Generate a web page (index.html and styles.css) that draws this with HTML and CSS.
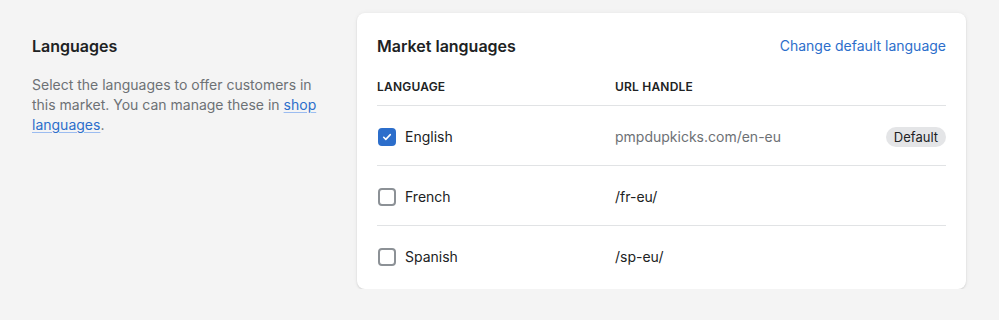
FILE: index.html
```html
<!DOCTYPE html>
<html lang="en">
<head>
<meta charset="UTF-8">
<meta name="viewport" content="width=device-width, initial-scale=1.0">
<title>Market languages</title>
<link rel="stylesheet" href="styles.css">
</head>
<body>

<div class="layout">
    <div class="annotation">
        <h2>Languages</h2>
        <p>Select the languages to offer customers in this market. You can manage these in <a href="#">shop languages</a>.</p>
    </div>

    <div class="card">
        <div class="card-header">
            <h3>Market languages</h3>
            <a href="#">Change default language</a>
        </div>

        <table class="lang-table">
            <thead>
                <tr>
                    <th class="col-lang">Language</th>
                    <th>URL handle</th>
                    <th></th>
                </tr>
            </thead>
            <tbody>
                <tr>
                    <td>
                        <div class="lang">
                            <span class="check checked">
                                <svg viewBox="0 0 20 20" width="12" height="12"><path d="M4.5 10.5l3.5 3.5 7.5-8" fill="none" stroke="#fff" stroke-width="2.6" stroke-linecap="round" stroke-linejoin="round"/></svg>
                            </span>
                            English
                        </div>
                    </td>
                    <td class="muted">pmpdupkicks.com/en-eu</td>
                    <td class="right"><span class="badge">Default</span></td>
                </tr>
                <tr>
                    <td><div class="lang"><span class="check"></span> French</div></td>
                    <td>/fr-eu/</td>
                    <td></td>
                </tr>
                <tr>
                    <td><div class="lang"><span class="check"></span> Spanish</div></td>
                    <td>/sp-eu/</td>
                    <td></td>
                </tr>
            </tbody>
        </table>
    </div>
</div>

</body>
</html>
```

FILE: styles.css
```css
body {
    margin: 0;
    background-color: #f4f4f4;
    font-family: Inter, "Noto Sans", sans-serif;
    font-size: 14px;
    line-height: 20px;
    color: #202223;
}
.layout {
    display: grid;
    grid-template-columns: 285px 1fr;
    column-gap: 40px;
    padding: 13px 33px 0 32px;
}
.annotation {
    padding-top: 21px;
}
.annotation h2 {
    margin: 0;
    font-size: 16px;
    font-weight: 600;
    line-height: 24px;
}
.annotation p {
    margin: 17px 0 0;
    color: #6d7175;
}
a {
    color: #2c6ecb;
    text-decoration: none;
}
.annotation a {
    text-decoration: underline;
    text-decoration-color: #9bbcf0;
    text-underline-offset: 2px;
}
.card {
    background-color: #fff;
    border-radius: 8px;
    box-shadow: 0 0 5px rgba(23, 24, 24, 0.05), 0 1px 2px rgba(0, 0, 0, 0.12);
    padding: 21px 20px 4px;
}
.card-header {
    display: flex;
    justify-content: space-between;
    align-items: center;
    height: 24px;
}
.card-header h3 {
    margin: 0;
    font-size: 16px;
    font-weight: 600;
}
.lang-table {
    width: 100%;
    border-collapse: collapse;
    margin-top: 12px;
}
.lang-table th {
    text-align: left;
    font-size: 12px;
    font-weight: 600;
    line-height: 16px;
    text-transform: uppercase;
    letter-spacing: 0.2px;
    padding: 9px 0 10px;
    border-bottom: 1px solid #e1e3e5;
}
.lang-table .col-lang {
    width: 238px;
}
.lang-table td {
    height: 57px;
    padding: 2px 0 0;
    vertical-align: middle;
    border-bottom: 1px solid #e1e3e5;
}
.lang-table tbody tr:last-child td {
    border-bottom: none;
}
.lang {
    display: flex;
    align-items: center;
    gap: 9px;
}
.muted {
    color: #6d7175;
}
.right {
    text-align: right;
}
.check {
    box-sizing: border-box;
    width: 18px;
    height: 18px;
    margin-left: 1px;
    border: 2px solid #8c9196;
    border-radius: 4px;
    display: inline-flex;
    align-items: center;
    justify-content: center;
}
.check.checked {
    background-color: #2c6ecb;
    border-color: #2c6ecb;
}
.badge {
    display: inline-block;
    background-color: #e4e5e7;
    border-radius: 10px;
    padding: 0 8px;
    font-size: 13px;
    line-height: 20px;
    color: #202223;
}
```
